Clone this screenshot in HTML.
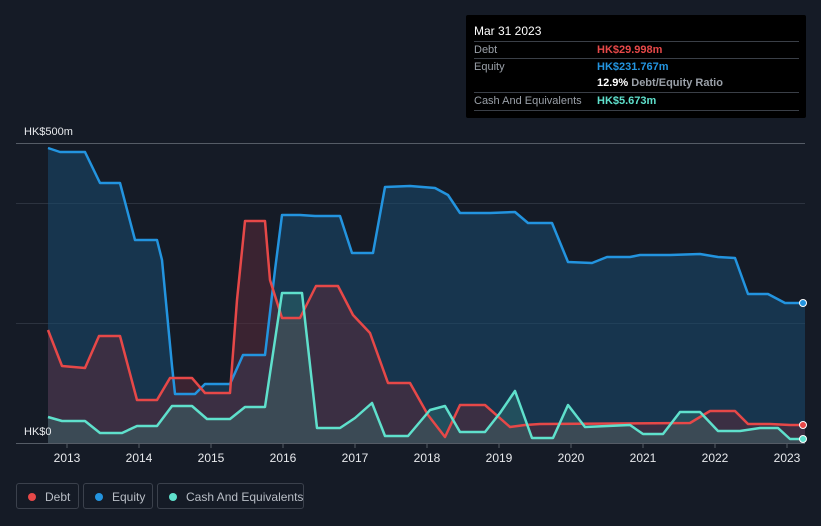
<!DOCTYPE html>
<html><head><meta charset="utf-8"><style>
body{margin:0;width:821px;height:526px;background:#151b26;font-family:"Liberation Sans",sans-serif;overflow:hidden;position:relative}
.tt{position:absolute;left:466px;top:15px;width:340px;height:103px;background:#000;border-radius:2px}
.tt .h{position:absolute;left:8px;top:9px;color:#fff;font-size:12px}
.row{position:absolute;left:8px;width:325px;border-top:1px solid #3a3f47;height:17px;font-size:11px;color:#9aa0a8;line-height:17px}
.row span{position:absolute;left:123px;font-weight:bold}
.leg{position:absolute;top:483px;height:26px;border:1px solid #3b414c;border-radius:3px;color:#b9bec6;font-size:12px;line-height:26px;box-sizing:border-box;white-space:nowrap}
.leg i{position:absolute;left:11px;top:9px;width:8px;height:8px;border-radius:50%}
</style></head><body>
<svg width="821" height="526" style="position:absolute;left:0;top:0">
<g stroke="#2c333f" stroke-width="1">
<line x1="16" x2="805" y1="143.5" y2="143.5" stroke="#555c66"/>
<line x1="16" x2="805" y1="203.5" y2="203.5"/>
<line x1="16" x2="805" y1="323.5" y2="323.5"/>
<line x1="16" x2="805" y1="443.5" y2="443.5" stroke="#555c66"/>
</g>
<polygon fill="#1a4a70" fill-opacity="0.55" points="48,443 48,148 60,152 85,152 100,183 120,183 135,240 157,240 162,260 172,366 175,394 195,394 205,384 230,384 243,355 265,355 275,270 282,215 300,215 315,216 340,216 352,253 373,253 385,187 410,186 435,188 448,195 460,213 490,213 515,212 528,223 552,223 568,262 592,263 607,257 630,257 640,255 670,255 700,254 718,257 735,258 748,294 768,294 785,303 805,303 805,443"/>
<polygon fill="#5a2a3a" fill-opacity="0.55" points="48,443 48,330 62,366 85,368 99,336 120,336 137,400 157,400 170,378 192,378 205,393 230,393 237,300 245,221 265,221 270,280 282,318 300,318 316,286 338,286 353,315 370,333 388,383 410,383 428,415 445,437 460,405 485,405 510,427 525,425 540,424 690,423 710,411 735,411 748,424 770,424 790,425 805,425 805,443"/>
<polygon fill="#3c8a80" fill-opacity="0.3" points="48,443 48,417 62,421 85,421 100,433 122,433 137,426 157,426 172,406 192,406 207,419 230,419 245,407 265,407 282,293 302,293 317,428 340,428 355,418 372,403 385,436 408,436 430,410 445,406 460,432 485,432 500,413 515,391 532,438 553,438 568,405 585,427 630,425 643,434 663,434 680,412 700,412 718,431 740,431 760,428 778,428 790,439 805,439 805,443"/>
<g fill="none" stroke-width="2.5" stroke-linejoin="round">
<polyline stroke="#2394df" points="48,148 60,152 85,152 100,183 120,183 135,240 157,240 162,260 172,366 175,394 195,394 205,384 230,384 243,355 265,355 275,270 282,215 300,215 315,216 340,216 352,253 373,253 385,187 410,186 435,188 448,195 460,213 490,213 515,212 528,223 552,223 568,262 592,263 607,257 630,257 640,255 670,255 700,254 718,257 735,258 748,294 768,294 785,303 805,303"/>
<polyline stroke="#e64848" points="48,330 62,366 85,368 99,336 120,336 137,400 157,400 170,378 192,378 205,393 230,393 237,300 245,221 265,221 270,280 282,318 300,318 316,286 338,286 353,315 370,333 388,383 410,383 428,415 445,437 460,405 485,405 510,427 525,425 540,424 690,423 710,411 735,411 748,424 770,424 790,425 805,425"/>
<polyline stroke="#5fe0cc" points="48,417 62,421 85,421 100,433 122,433 137,426 157,426 172,406 192,406 207,419 230,419 245,407 265,407 282,293 302,293 317,428 340,428 355,418 372,403 385,436 408,436 430,410 445,406 460,432 485,432 500,413 515,391 532,438 553,438 568,405 585,427 630,425 643,434 663,434 680,412 700,412 718,431 740,431 760,428 778,428 790,439 805,439"/>
</g>
<circle cx="803" cy="303" r="3.5" fill="#2394df" stroke="#fff" stroke-width="1"/>
<circle cx="803" cy="425" r="3.5" fill="#e64848" stroke="#fff" stroke-width="1"/>
<circle cx="803" cy="439" r="3.5" fill="#5fe0cc" stroke="#fff" stroke-width="1"/>
<g stroke="#555c66"><line x1="67" x2="67" y1="444" y2="448"/><line x1="139" x2="139" y1="444" y2="448"/><line x1="211" x2="211" y1="444" y2="448"/><line x1="283" x2="283" y1="444" y2="448"/><line x1="355" x2="355" y1="444" y2="448"/><line x1="427" x2="427" y1="444" y2="448"/><line x1="499" x2="499" y1="444" y2="448"/><line x1="571" x2="571" y1="444" y2="448"/><line x1="643" x2="643" y1="444" y2="448"/><line x1="715" x2="715" y1="444" y2="448"/><line x1="787" x2="787" y1="444" y2="448"/></g>
<g fill="#e8eaed" font-size="12" font-family="Liberation Sans" text-anchor="middle">
<text x="67" y="462">2013</text><text x="139" y="462">2014</text><text x="211" y="462">2015</text><text x="283" y="462">2016</text><text x="355" y="462">2017</text><text x="427" y="462">2018</text><text x="499" y="462">2019</text><text x="571" y="462">2020</text><text x="643" y="462">2021</text><text x="715" y="462">2022</text><text x="787" y="462">2023</text>
</g>
<text x="24" y="135" fill="#e8eaed" font-size="11" font-family="Liberation Sans">HK$500m</text>
<text x="24" y="435" fill="#e8eaed" font-size="11" font-family="Liberation Sans">HK$0</text>
</svg>
<div class="tt"><div class="h">Mar 31 2023</div>
<div class="row" style="top:26px">Debt<span style="color:#e64848">HK$29.998m</span></div>
<div class="row" style="top:43px">Equity<span style="color:#2394df">HK$231.767m</span></div>
<div class="row" style="top:60px;border-top:none"><span style="color:#fff">12.9% <b style="color:#9aa0a8">Debt/Equity Ratio</b></span></div>
<div class="row" style="top:77px">Cash And Equivalents<span style="color:#5fe0cc">HK$5.673m</span></div>
<div class="row" style="top:95px;height:0"></div>
</div>
<div class="leg" style="left:16px;width:63px"><i style="background:#e64848"></i><span style="position:absolute;left:28px">Debt</span></div>
<div class="leg" style="left:83px;width:70px"><i style="background:#2394df"></i><span style="position:absolute;left:28px">Equity</span></div>
<div class="leg" style="left:157px;width:147px"><i style="background:#5fe0cc"></i><span style="position:absolute;left:28px">Cash And Equivalents</span></div>
</body></html>
